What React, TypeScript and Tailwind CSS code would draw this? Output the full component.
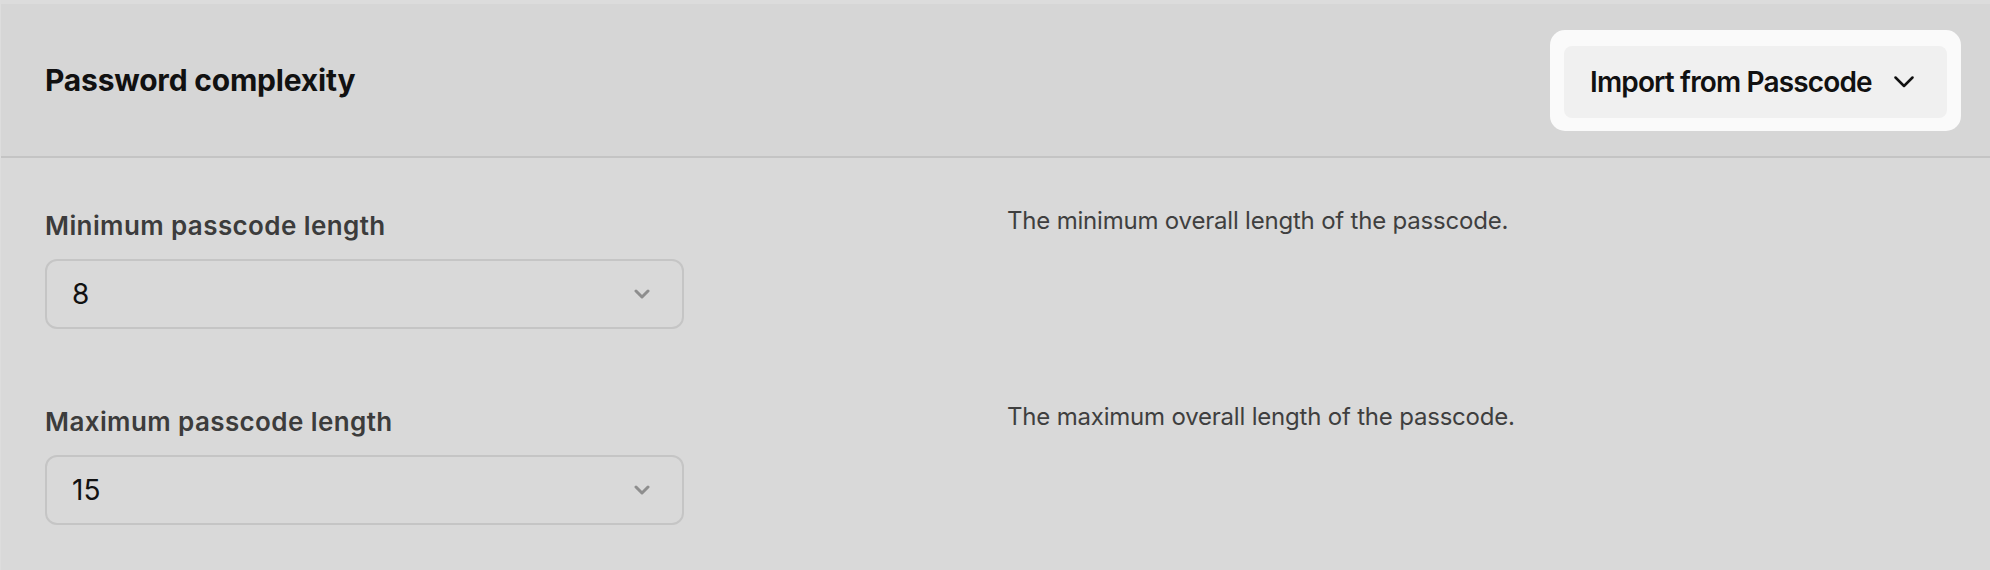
import React from "react";

const rows = [
  { label: "Minimum passcode length", value: "8", help: "The minimum overall length of the passcode." },
  { label: "Maximum passcode length", value: "15", help: "The maximum overall length of the passcode." },
];

function SelectChevron() {
  return (
    <svg width="16" height="10" viewBox="0 0 16 10" fill="none">
      <path d="M2 2l6 6 6-6" stroke="#8e8e8e" strokeWidth="3" strokeLinecap="round" strokeLinejoin="round" />
    </svg>
  );
}

export default function App() {
  return (
    <div
      className="w-full h-[570px] overflow-hidden bg-[#d9d9d9] border-l border-[#dddddd]"
      style={{ fontFamily: "Inter, 'Liberation Sans', sans-serif" }}
    >
      {/* Header */}
      <div className="h-[158px] flex items-center justify-between pl-[44px] pr-[29px] bg-[#d6d6d6] border-t-4 border-t-[#dcdcdc] border-b-2 border-b-[#c4c4c4]">
        <h2 className="text-[30px] leading-[36px] font-bold text-[#111111] tracking-[-0.2px]">
          Password complexity
        </h2>
        <div className="p-[14px] pt-[16px] pb-[13px] rounded-[15px] bg-[#fafafa]">
          <button className="h-[72px] w-[383px] flex items-center justify-between pl-[26px] pr-[33px] rounded-[8px] bg-[#f0f0f0]">
            <span className="text-[28px] font-semibold text-[#111111] tracking-[-0.85px]">Import from Passcode</span>
            <svg width="20" height="12" viewBox="0 0 20 12" fill="none">
              <path d="M1.5 1.5l8.5 8.5 8.5-8.5" stroke="#111111" strokeWidth="2.5" strokeLinecap="round" strokeLinejoin="round" />
            </svg>
          </button>
        </div>
      </div>

      {/* Fields */}
      <div className="pt-[52px] pl-[44px] flex flex-col gap-[77px]">
        {rows.map((row) => (
          <div key={row.label} className="flex items-start">
            <div className="w-[962px] flex flex-col gap-[17px]">
              <label className="text-[26px] leading-[32px] font-semibold text-[#3c3c3c] tracking-[0.4px]">
                {row.label}
              </label>
              <div className="w-[639px] h-[70px] flex items-center justify-between pl-[25px] pr-[32px] rounded-[12px] border-2 border-[#c5c5c5]">
                <span className="text-[28px] text-[#111111]">{row.value}</span>
                <SelectChevron />
              </div>
            </div>
            <p className="text-[24px] leading-[22px] text-[#3f3f3f] tracking-[-0.2px]">{row.help}</p>
          </div>
        ))}
      </div>
    </div>
  );
}
